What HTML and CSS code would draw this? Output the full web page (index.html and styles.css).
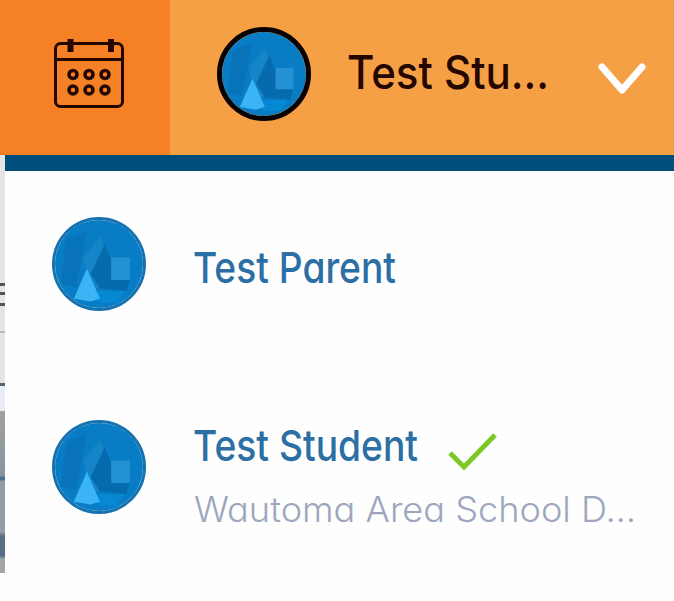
FILE: index.html
```html
<!DOCTYPE html>
<html lang="en">
<head>
    <meta charset="UTF-8">
    <meta name="viewport" content="width=device-width, initial-scale=1.0">
    <title>Test Student</title>
    <link rel="stylesheet" href="styles.css">
</head>
<body>
    <svg class="defs" width="0" height="0">
        <symbol id="avatar" viewBox="0 0 94 94">
            <clipPath id="round"><circle cx="47" cy="47" r="47"/></clipPath>
            <g clip-path="url(#round)">
                <rect width="94" height="94" fill="#087cc4"/>
                <path d="M12 20 L34 12 L22 72 L6 68 Z" fill="#0873b8"/>
                <path d="M48 18 L60 44 L58 68 L42 74 L34 56 L30 40 Z" fill="#1585c8"/>
                <path d="M53 26 L61 45 V64 H80 L76 76 L48 73 L38 58 Z" fill="#066bac"/>
                <path d="M60 40 H80 V64 H60 Z" fill="#2491d5"/>
                <path d="M45 76 L74 76 L66 88 H46 Z" fill="#0788d3"/>
                <path d="M34 52 L48 84 L38 87 L20 84 Z" fill="#3ab4f5"/>
            </g>
        </symbol>
    </svg>

    <div class="header">
        <div class="calendar">
            <svg width="70" height="72" viewBox="0 0 70 72" fill="none" stroke="#240800" stroke-width="3">
                <rect x="1.5" y="6.5" width="67" height="63" rx="5"/>
                <path d="M2 22.500H68"/>
                <path d="M16.500 2V15M57 2V15" stroke-width="6"/>
                <g stroke-width="3.500">
                    <circle cx="19" cy="37.500" r="4"/>
                    <circle cx="35" cy="37.500" r="4"/>
                    <circle cx="51" cy="37.500" r="4"/>
                    <circle cx="19" cy="53" r="4"/>
                    <circle cx="35" cy="53" r="4"/>
                    <circle cx="51" cy="53" r="4"/>
                </g>
            </svg>
        </div>
        <div class="account">
            <svg class="avatar current"><use href="#avatar"/></svg>
            <svg class="label" width="210" height="70"><text x="0" y="45" textLength="202" lengthAdjust="spacingAndGlyphs">Test Stu...</text></svg>
            <svg class="chevron" width="50" height="36" viewBox="0 0 50 36" fill="none" stroke="#fff" stroke-width="7" stroke-linecap="round" stroke-linejoin="round"><path d="M5 6L25 29L45 6"/></svg>
        </div>
    </div>

    <div class="main">
        <div class="page-edge">
            <div class="edge-text"></div>
            <div class="edge-line"></div>
            <div class="edge-photo"></div>
        </div>
        <div class="menu">
            <div class="user">
                <svg class="avatar"><use href="#avatar"/></svg>
                <svg class="name" width="240" height="70"><text x="0" y="45" textLength="203" lengthAdjust="spacingAndGlyphs">Test Parent</text></svg>
            </div>
            <div class="user student">
                <svg class="avatar"><use href="#avatar"/></svg>
                <div class="details">
                    <div class="row">
                        <svg class="name" width="250" height="70"><text x="0" y="45" textLength="225" lengthAdjust="spacingAndGlyphs">Test Student</text></svg>
                        <svg class="check" width="50" height="40" viewBox="0 0 50 40" fill="none" stroke="#7bc926" stroke-width="5"><path d="M2 20L16 34L47 2"/></svg>
                    </div>
                    <svg class="school" width="460" height="50"><text x="0" y="32" textLength="442" lengthAdjust="spacingAndGlyphs">Wautoma Area School D...</text></svg>
                </div>
            </div>
        </div>
    </div>
</body>
</html>
```
FILE: styles.css
```css
body {
    margin: 0;
    background-color: #fefefe;
    font-family: Inter, "Noto Sans", sans-serif;
    font-feature-settings: "cv11", "ss03";
    overflow: hidden;
}
svg {
    display: block;
    flex: none;
    overflow: visible;
}
.defs {
    position: absolute;
}
.header {
    display: flex;
    height: 155px;
    background-color: #f58026;
}
.calendar {
    width: 170px;
    padding: 37px 0 0 54px;
    box-sizing: border-box;
}
.account {
    flex: 1;
    display: flex;
    align-items: flex-start;
    padding-left: 47px;
    background-color: #f6a046;
}
.avatar {
    width: 94px;
    height: 94px;
    border-radius: 50%;
    box-sizing: border-box;
    border: 3px solid #1772b0;
}
.avatar.current {
    margin-top: 27px;
    border: 5px solid #080302;
}
.label {
    margin: 44px 0 0 36px;
    font-size: 46px;
    font-weight: 500;
    fill: #240700;
}
.chevron {
    margin: 61px 0 0 40px;
}
.main {
    display: flex;
}
.page-edge {
    width: 5px;
    height: 418px;
    background-color: #e5e5e6;
}
.edge-text {
    height: 24px;
    margin-top: 128px;
    background: linear-gradient(#555 3px, transparent 3px 9px, #555 9px 12px, transparent 12px 20px, #555 20px 23px, transparent 23px);
}
.edge-line {
    height: 104px;
    background: linear-gradient(transparent 24px, #b9b9c0 24px 26px, transparent 26px 76px, #536477 76px 79px, #e8edf5 79px);
}
.edge-photo {
    height: 162px;
    background: linear-gradient(#a0a29f, #89949e 65px, #526f92 66px 69px, #929da5 70px 121px, #586e85 125px 145px, #a1a6a9 148px);
}
.menu {
    flex: 1;
    height: 430px;
    border-top: 16px solid #004e7b;
    background-color: #fefefe;
}
.user {
    display: flex;
    align-items: flex-start;
    padding: 46px 0 0 47px;
    height: 157px;
}
.user .name {
    margin: 21px 0 0 47px;
    font-size: 43px;
    font-weight: 500;
    fill: #2c6fa5;
}
.student {
    height: 200px;
}
.student .row .name {
    margin-top: -4px;
}
.row {
    display: flex;
    height: 70px;
}
.check {
    margin: 13px 0 0 5px;
}
.school {
    margin-left: 48px;
    font-size: 35px;
    font-weight: 300;
    fill: #9ca7bd;
}
```
